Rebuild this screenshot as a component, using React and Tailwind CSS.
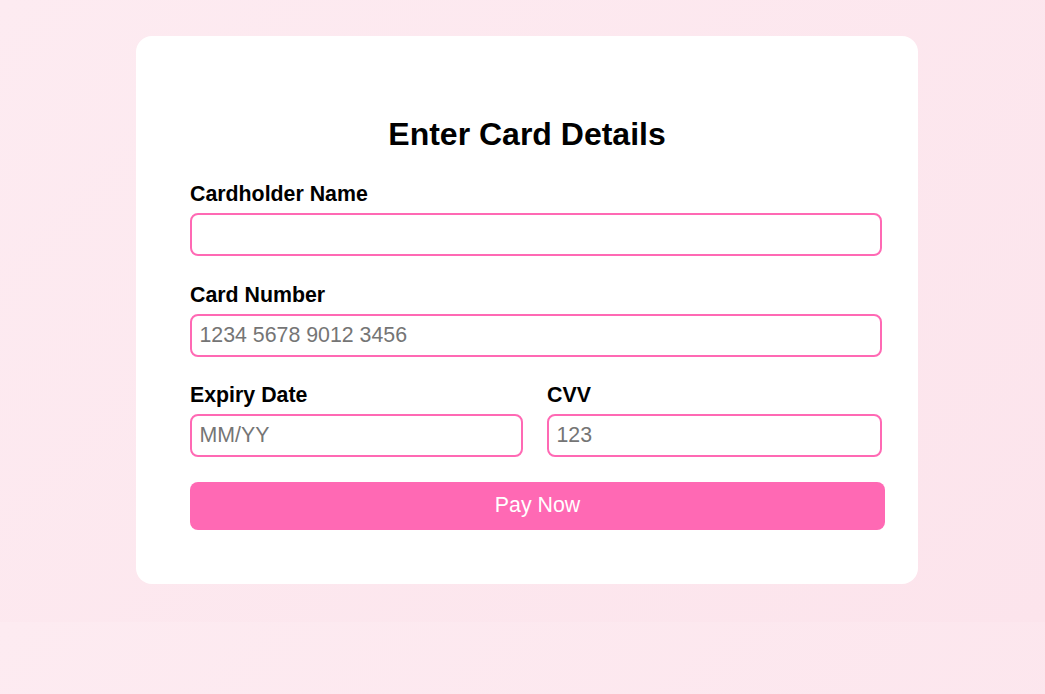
import React from 'react';

const Field = ({ label, placeholder, width, className = '' }) => (
  <div className={className}>
    <label className="block text-[21.33px] leading-[24.5px] font-bold text-black mb-[6.7px]">
      {label}
    </label>
    <input
      type="text"
      placeholder={placeholder}
      className={`${width} h-[43px] border-2 border-[#ff69b4] rounded-[8px] px-[7.5px] text-[21.33px] text-black placeholder:text-[#757575] outline-none bg-white`}
    />
  </div>
);

const App = () => {
  return (
    <div className="w-full h-[694px] overflow-hidden font-['Liberation_Sans',Arial,sans-serif]">
      {/* Page background */}
      <div className="h-[622px] bg-[linear-gradient(135deg,#fdebf1,#fce4ec)] pt-[36px]">
        {/* Card */}
        <div className="ml-[136px] w-[782px] h-[548px] bg-white rounded-[16px] pt-[79.5px]">
          <h1 className="text-center text-[32px] leading-[37px] font-bold text-black mb-[29.5px]">
            Enter Card Details
          </h1>

          <div className="ml-[54px] w-[695px]">
            <Field label="Cardholder Name" placeholder="" width="w-[692px]" className="mb-[26.5px]" />
            <Field label="Card Number" placeholder="1234 5678 9012 3456" width="w-[692px]" className="mb-[25.8px]" />

            <div className="flex gap-[24px] mb-[24.8px]">
              <Field label="Expiry Date" placeholder="MM/YY" width="w-[333px]" />
              <Field label="CVV" placeholder="123" width="w-[335px]" />
            </div>

            <button className="w-full h-[48px] bg-[#ff69b4] text-white text-[21.33px] rounded-[8px]">
              Pay Now
            </button>
          </div>
        </div>
      </div>

      {/* Repeated gradient below body */}
      <div className="h-[72px] overflow-hidden">
        <div className="h-[622px] bg-[linear-gradient(135deg,#fdebf1,#fce4ec)]" />
      </div>
    </div>
  );
};

export default App;
